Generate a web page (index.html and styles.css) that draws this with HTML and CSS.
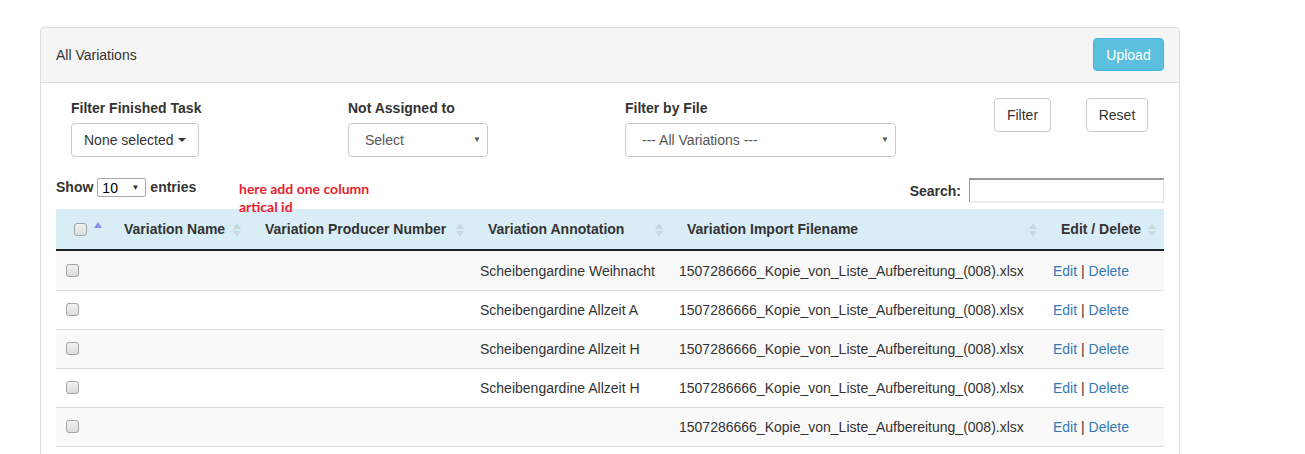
FILE: index.html
```html
<!DOCTYPE html>
<html>
<head>
<meta charset="utf-8">
<title>All Variations</title>
<link rel="stylesheet" href="styles.css">
</head>
<body>
<div class="page">
  <div class="panel">
    <div class="panel-heading">
      <span class="panel-title">All Variations</span>
      <button class="btn btn-info">Upload</button>
    </div>
    <div class="panel-body">
      <div class="filters">
        <div class="fcol">
          <div class="flabel">Filter Finished Task</div>
          <div class="dd-btn">None selected <span class="caret"></span></div>
        </div>
        <div class="fcol">
          <div class="flabel">Not Assigned to</div>
          <div class="sel sel-assign"><span>Select</span><span class="arrow">▼</span></div>
        </div>
        <div class="fcol">
          <div class="flabel">Filter by File</div>
          <div class="sel sel-file"><span>--- All Variations ---</span><span class="arrow">▼</span></div>
        </div>
        <div class="fcol fbtns">
          <button class="btn btn-default">Filter</button>
          <button class="btn btn-default btn-reset">Reset</button>
        </div>
      </div>

      <div class="toolbar">
        <div class="length">Show <span class="len-sel"><span>10</span><span class="arrow">▼</span></span> entries</div>
        <div class="note">here add one column<br>artical id</div>
        <div class="search"><span>Search:</span><span class="search-input"></span></div>
      </div>

      <table class="grid">
        <colgroup>
          <col class="c1"><col class="c2"><col class="c3"><col class="c4"><col class="c5"><col class="c6">
        </colgroup>
        <thead>
          <tr>
            <th class="th-check"><span class="cb"></span><span class="asc"></span></th>
            <th class="sort">Variation Name</th>
            <th class="sort">Variation Producer Number</th>
            <th class="sort">Variation Annotation</th>
            <th class="sort">Variation Import Filename</th>
            <th class="sort">Edit / Delete</th>
          </tr>
        </thead>
        <tbody>
          <tr class="odd">
            <td class="td-check"><span class="cb"></span></td><td></td><td></td>
            <td>Scheibengardine Weihnacht</td>
            <td>1507286666_Kopie_von_Liste_Aufbereitung_(008).xlsx</td>
            <td><a href="#">Edit</a> | <a href="#">Delete</a></td>
          </tr>
          <tr>
            <td class="td-check"><span class="cb"></span></td><td></td><td></td>
            <td>Scheibengardine Allzeit A</td>
            <td>1507286666_Kopie_von_Liste_Aufbereitung_(008).xlsx</td>
            <td><a href="#">Edit</a> | <a href="#">Delete</a></td>
          </tr>
          <tr class="odd">
            <td class="td-check"><span class="cb"></span></td><td></td><td></td>
            <td>Scheibengardine Allzeit H</td>
            <td>1507286666_Kopie_von_Liste_Aufbereitung_(008).xlsx</td>
            <td><a href="#">Edit</a> | <a href="#">Delete</a></td>
          </tr>
          <tr>
            <td class="td-check"><span class="cb"></span></td><td></td><td></td>
            <td>Scheibengardine Allzeit H</td>
            <td>1507286666_Kopie_von_Liste_Aufbereitung_(008).xlsx</td>
            <td><a href="#">Edit</a> | <a href="#">Delete</a></td>
          </tr>
          <tr class="odd">
            <td class="td-check"><span class="cb"></span></td><td></td><td></td>
            <td></td>
            <td>1507286666_Kopie_von_Liste_Aufbereitung_(008).xlsx</td>
            <td><a href="#">Edit</a> | <a href="#">Delete</a></td>
          </tr>
        </tbody>
      </table>
    </div>
  </div>
</div>
</body>
</html>
```

FILE: styles.css
```css
* { box-sizing: border-box; }
html, body { margin: 0; padding: 0; background: #fff; }
body {
  font-family: "Liberation Sans", Arial, sans-serif;
  font-size: 14px;
  line-height: 20px;
  color: #333;
  overflow: hidden;
}
.page { padding: 27px 0 0 40px; }
.panel {
  width: 1140px;
  border: 1px solid #ddd;
  border-radius: 4px;
  background: #fff;
}
.panel-heading {
  height: 55px;
  background: #f5f5f5;
  border-bottom: 1px solid #ddd;
  border-radius: 3px 3px 0 0;
  padding: 10px 15px 0 15px;
  display: flex;
  justify-content: space-between;
  align-items: flex-start;
}
.panel-title { margin-top: 7px; }
.btn {
  font-family: inherit;
  font-size: 14px;
  line-height: 20px;
  border-radius: 4px;
  padding: 6px 12px;
  cursor: pointer;
}
.btn-info {
  background: #5bc0de;
  border: 1px solid #46b8da;
  color: #fff;
  height: 33px;
  width: 71px;
  padding: 6px 0;
}
.btn-default {
  background: #fff;
  border: 1px solid #ccc;
  color: #333;
  height: 34px;
}
.panel-body { padding: 15px 15px 40px 15px; }

.filters {
  display: grid;
  grid-template-columns: repeat(4, 277px);
}
.fcol { padding: 0 15px; }
.flabel { font-weight: bold; height: 20px; margin: 0 0 5px 0; }
.dd-btn {
  display: inline-flex;
  align-items: center;
  height: 34px;
  padding: 0 12px;
  border: 1px solid #ccc;
  border-radius: 4px;
  background: #fff;
  color: #333;
}
.caret {
  display: inline-block;
  width: 0; height: 0;
  margin-left: 4px;
  border-top: 4px solid #333;
  border-left: 4px solid transparent;
  border-right: 4px solid transparent;
}
.sel {
  display: flex;
  align-items: center;
  justify-content: space-between;
  height: 34px;
  border: 1px solid #ccc;
  border-radius: 4px;
  background: #fff;
  color: #555;
  padding: 0 6px 0 16px;
}
.sel-assign { width: 140px; }
.sel-file { width: 271px; }
.arrow { font-size: 8px; color: #555; line-height: 10px; }
.fbtns {
  display: flex;
  justify-content: flex-end;
  align-items: flex-start;
  gap: 35px;
  padding-right: 16px;
}
.fbtns .btn { width: 57px; padding: 6px 0; }
.fbtns .btn-reset { width: 62px; }

.toolbar {
  position: relative;
  display: flex;
  justify-content: space-between;
  align-items: flex-start;
  margin-top: 21px;
  height: 31px;
}
.length { font-weight: bold; display: flex; align-items: center; gap: 4px; margin-top: -1px; }
.len-sel {
  display: inline-flex;
  justify-content: space-between;
  align-items: center;
  width: 49px;
  height: 19px;
  margin-top: 1px;
  border: 1px solid #a9a9a9;
  border-radius: 2px;
  padding: 0 6px 0 4px;
  font-weight: normal;
  color: #000;
}
.len-sel .arrow { color: #333; }
.note {
  position: absolute;
  left: 183px;
  top: 2px;
  font-family: Lato, "Open Sans", sans-serif;
  font-weight: bold;
  font-size: 14px;
  line-height: 18px;
  color: #ec1c2e;
}
.search { display: flex; align-items: center; gap: 8px; font-weight: bold; }
.search-input {
  display: block;
  width: 195px;
  height: 25px;
  border-style: solid;
  border-width: 2px 1px 2px 1px;
  border-color: #999 #ddd #eee #999;
  background: #fff;
}

.grid {
  width: 1108px;
  border-collapse: collapse;
  table-layout: fixed;
}
col.c1 { width: 52px; }
col.c2 { width: 141px; }
col.c3 { width: 223px; }
col.c4 { width: 199px; }
col.c5 { width: 374px; }
col.c6 { width: 119px; }
thead tr { background: #d9edf7; }
th {
  text-align: left;
  font-weight: bold;
  padding: 10px 16px;
  border-bottom: 2px solid #222;
  white-space: nowrap;
  position: relative;
}
th.sort::before, th.sort::after {
  content: "";
  position: absolute;
  right: 8px;
  width: 0; height: 0;
  border-left: 4px solid transparent;
  border-right: 4px solid transparent;
}
th.sort::before { top: 14px; border-bottom: 6px solid #c9d9e1; }
th.sort::after { top: 22px; border-top: 6px solid #c9d9e1; }
th.th-check { padding: 10px 0 10px 18px; }
.asc {
  display: inline-block;
  vertical-align: top;
  margin: 3px 0 0 7px;
  width: 0; height: 0;
  border-left: 4px solid transparent;
  border-right: 4px solid transparent;
  border-bottom: 6px solid #8d8ee6;
}
.cb {
  display: inline-block;
  width: 13px; height: 13px;
  border: 1px solid #a3a3a3;
  border-radius: 3px;
  background: linear-gradient(#f2f2f2, #dcdcdc);
  vertical-align: middle;
}
th .cb { vertical-align: top; margin-top: 4px; }
td {
  padding: 9px 8px 9px 8px;
  border-top: 1px solid #ddd;
  border-bottom: 1px solid #ddd;
  white-space: nowrap;
  overflow: hidden;
}
tbody tr:first-child td { border-top: 0; padding-top: 10px; }
td.td-check { padding-left: 10px; }
td .cb { margin-top: -3px; }
tr.odd { background: #f9f9f9; }
a { color: #337ab7; text-decoration: none; }
```
